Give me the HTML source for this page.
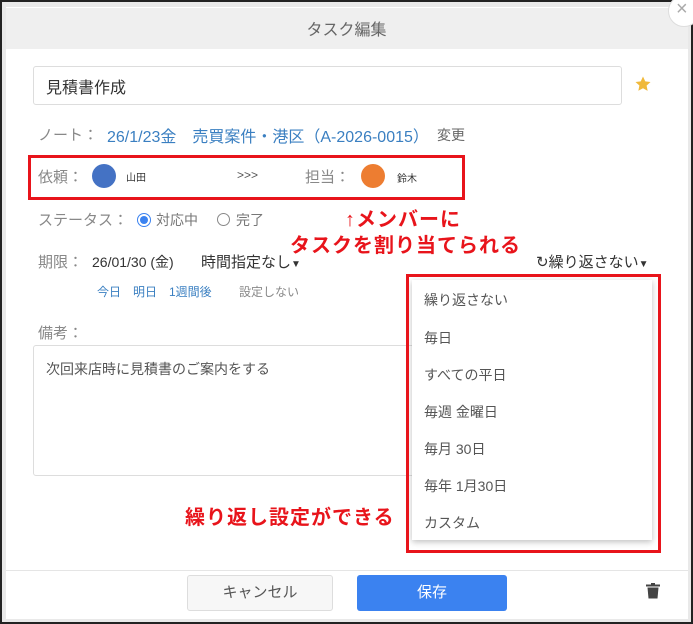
<!DOCTYPE html>
<html><head><meta charset="utf-8"><style>
*{margin:0;padding:0;box-sizing:border-box}
body{width:693px;height:624px;overflow:hidden;background:#777;font-family:"Liberation Sans","Noto Sans CJK JP",sans-serif;position:relative}
.a{position:absolute;white-space:nowrap}
.g{color:#888;font-size:15px}
.r{color:#e8141b;font-weight:bold;font-size:20px;letter-spacing:1px}
.it{position:absolute;left:12px;font-size:14px;color:#555}
</style></head><body>
<div class="a" style="left:0;top:0;width:693px;height:624px;border:2px solid #222;background:#e9e9e9"></div>
<div class="a" style="left:6px;top:7px;width:682px;height:612px;background:#fff"></div>
<div class="a" style="left:6px;top:8px;width:682px;height:41px;background:#efefef"></div>
<div class="a" style="left:0;top:16px;width:693px;text-align:center;font-size:16px;color:#666">タスク編集</div>
<div class="a" style="left:668px;top:-5px;width:32px;height:32px;border-radius:50%;background:#fff;border:1px solid #ddd"></div>
<div class="a" style="left:676px;top:-2px;font-size:20px;color:#aaa">×</div>
<div class="a" style="left:33px;top:66px;width:589px;height:39px;border:1px solid #ddd;border-radius:3px"></div>
<div class="a" style="left:46px;top:74px;font-size:16px;color:#333">見積書作成</div>
<svg class="a" style="left:634px;top:75px" width="18" height="18" viewBox="0 0 24 24"><path d="M12 2l3 6.5 7 .8-5.2 4.8 1.4 7L12 17.6 5.8 21l1.4-7L2 9.3l7-.8z" fill="#f0b93b"/></svg>
<div class="a g" style="left:38px;top:124px">ノート：</div>
<div class="a" style="left:107px;top:123px;font-size:16px;color:#3a7fc1">26/1/23金　売買案件・港区（A-2026-0015）</div>
<div class="a" style="left:437px;top:125px;font-size:14px;color:#666">変更</div>
<div class="a" style="left:28px;top:155px;width:437px;height:45px;border:3px solid #e8141b"></div>
<div class="a g" style="left:38px;top:166px">依頼：</div>
<div class="a" style="left:92px;top:164px;width:24px;height:24px;border-radius:50%;background:#4472c4"></div>
<div class="a" style="left:126px;top:169px;font-size:10px;color:#333">山田</div>
<div class="a" style="left:237px;top:168px;font-size:12px;color:#555">&gt;&gt;&gt;</div>
<div class="a g" style="left:305px;top:166px">担当：</div>
<div class="a" style="left:361px;top:164px;width:24px;height:24px;border-radius:50%;background:#ed7d31"></div>
<div class="a" style="left:397px;top:170px;font-size:10px;color:#333">鈴木</div>
<div class="a g" style="left:38px;top:209px">ステータス：</div>
<div class="a" style="left:137px;top:213px;width:14px;height:14px;border-radius:50%;border:1px solid #3b82f0"></div>
<div class="a" style="left:140px;top:216px;width:8px;height:8px;border-radius:50%;background:#3b82f0"></div>
<div class="a" style="left:156px;top:210px;font-size:14px;color:#777">対応中</div>
<div class="a" style="left:217px;top:213px;width:13px;height:13px;border-radius:50%;border:1px solid #888"></div>
<div class="a" style="left:236px;top:210px;font-size:14px;color:#777">完了</div>
<div class="a r" style="left:345px;top:203px">↑メンバーに</div>
<div class="a r" style="left:290px;top:229px">タスクを割り当てられる</div>
<div class="a g" style="left:38px;top:251px">期限：</div>
<div class="a" style="left:92px;top:252px;font-size:14px;color:#333">26/01/30 (金)</div>
<div class="a" style="left:201px;top:251px;font-size:15px;color:#333">時間指定なし<span style="font-size:10px">▼</span></div>
<div class="a" style="left:536px;top:251px;font-size:15px;color:#333">↻繰り返さない<span style="font-size:10px">▼</span></div>
<div class="a" style="left:97px;top:283px;font-size:12px;color:#3a7fc1">今日　明日　1週間後</div>
<div class="a" style="left:239px;top:283px;font-size:12px;color:#888">設定しない</div>
<div class="a g" style="left:38px;top:322px">備考：</div>
<div class="a" style="left:33px;top:345px;width:420px;height:131px;border:1px solid #ddd;border-radius:3px"></div>
<div class="a" style="left:46px;top:359px;font-size:14px;color:#555">次回来店時に見積書のご案内をする</div>
<div class="a" style="left:412px;top:280px;width:240px;height:260px;background:#fff;box-shadow:0 2px 6px rgba(0,0,0,.25)">
<div class="it" style="top:10px">繰り返さない</div>
<div class="it" style="top:48px">毎日</div>
<div class="it" style="top:85px">すべての平日</div>
<div class="it" style="top:122px">毎週 金曜日</div>
<div class="it" style="top:159px">毎月 30日</div>
<div class="it" style="top:196px">毎年 1月30日</div>
<div class="it" style="top:233px">カスタム</div>
</div>
<div class="a" style="left:406px;top:274px;width:255px;height:279px;border:3px solid #e8141b"></div>
<div class="a r" style="left:185px;top:501px">繰り返し設定ができる</div>
<div class="a" style="left:6px;top:570px;width:682px;height:1px;background:#e5e5e5"></div>
<div class="a" style="left:187px;top:575px;width:146px;height:36px;background:#f7f7f7;border:1px solid #ddd;border-radius:3px;text-align:center;line-height:34px;font-size:15px;color:#555">キャンセル</div>
<div class="a" style="left:357px;top:575px;width:150px;height:36px;background:#3b82f0;border-radius:3px;text-align:center;line-height:36px;font-size:15px;color:#fff">保存</div>
<svg class="a" style="left:646px;top:583px" width="14" height="16" viewBox="0 0 14 16"><rect x="0" y="1.5" width="14" height="2" fill="#444"/><rect x="5" y="0" width="4" height="2" fill="#444"/><path d="M1.5 4.5h11l-1 11h-9z" fill="#444"/></svg>
</body></html>
